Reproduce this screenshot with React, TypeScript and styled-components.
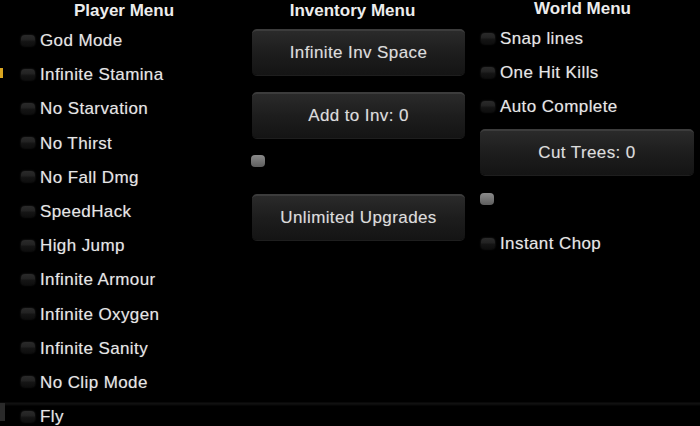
import React from "react";
import styled, { createGlobalStyle } from "styled-components";

const GlobalStyle = createGlobalStyle`
  html, body {
    margin: 0;
    padding: 0;
    background: #000;
  }
  body {
    font-family: "Liberation Sans", Arial, sans-serif;
  }
`;

const Screen = styled.div`
  position: relative;
  width: 700px;
  height: 426px;
  overflow: hidden;
  background:
    linear-gradient(
      to bottom,
      transparent 402px,
      #121212 403px,
      #0a0a0a 405px,
      transparent 406px
    ),
    #000;
  display: grid;
  grid-template-columns: 220px 225px 223px;
  column-gap: 6px;
  padding-left: 14px;
  box-sizing: border-box;
  align-items: start;
`;

const Column = styled.div<{ $top?: number }>`
  display: flex;
  flex-direction: column;
  margin-top: ${(p) => p.$top ?? 0}px;
`;

const Title = styled.div`
  height: 22px;
  line-height: 22px;
  text-align: center;
  font-size: 17px;
  font-weight: 700;
  color: #ececec;
  margin-bottom: 2px;
`;

const ToggleRow = styled.div<{ $indent?: number }>`
  height: 34.2px;
  display: flex;
  align-items: center;
  gap: 5px;
  padding-left: ${(p) => p.$indent ?? 7}px;
`;

const Box = styled.span`
  width: 14px;
  height: 11px;
  margin-top: -2px;
  border-radius: 4px;
  flex: none;
  background: linear-gradient(to bottom, #2a2a2a 0%, #232323 40%, #141414 60%, #0e0e0e 100%);
  box-shadow: 0 0 2px #2c2c2c;
`;

const Label = styled.span`
  font-size: 17px;
  letter-spacing: 0.4px;
  color: #e6e6e6;
  text-shadow: 0 0 1px rgba(255, 255, 255, 0.35);
  white-space: nowrap;
`;

const Stack = styled.div`
  display: flex;
  flex-direction: column;
  gap: 17px;
  margin-top: 5px;
`;

const Button = styled.div<{ $indent?: number; $top?: number }>`
  height: 46px;
  margin-left: ${(p) => p.$indent ?? 12}px;
  margin-top: ${(p) => p.$top ?? 0}px;
  border-radius: 5px;
  box-sizing: border-box;
  border-top: 2px solid #3c3c3c;
  background: linear-gradient(to bottom, #2a2a2a 0%, #1d1d1d 50%, #141414 100%);
  box-shadow: 0 1px 0 #1e1e1e;
  display: flex;
  align-items: center;
  justify-content: center;
  font-size: 17px;
  letter-spacing: 0.4px;
  color: #dcdcdc;
  text-shadow: 0 0 1px rgba(255, 255, 255, 0.3);
`;

const SliderRow = styled.div<{ $indent?: number; $h: number; $top?: number }>`
  height: ${(p) => p.$h}px;
  margin-top: ${(p) => p.$top ?? 0}px;
  padding-left: ${(p) => p.$indent ?? 11}px;
`;

const Thumb = styled.span`
  display: block;
  width: 14px;
  height: 12px;
  border-radius: 4px;
  background: linear-gradient(to bottom, #8a8a8a, #5e5e5e);
`;

const EdgeMark = styled.span<{ $y: number; $h: number; $w: number; $c: string }>`
  position: absolute;
  left: 0;
  top: ${(p) => p.$y}px;
  width: ${(p) => p.$w}px;
  height: ${(p) => p.$h}px;
  background: ${(p) => p.$c};
`;

const player = [
  "God Mode",
  "Infinite Stamina",
  "No Starvation",
  "No Thirst",
  "No Fall Dmg",
  "SpeedHack",
  "High Jump",
  "Infinite Armour",
  "Infinite Oxygen",
  "Infinite Sanity",
  "No Clip Mode",
  "Fly",
];

const world = ["Snap lines", "One Hit Kills", "Auto Complete"];

const Toggle = ({ label, indent }: { label: string; indent?: number }) => (
  <ToggleRow $indent={indent}>
    <Box />
    <Label>{label}</Label>
  </ToggleRow>
);

export default function App() {
  return (
    <>
      <GlobalStyle />
      <Screen>
        <EdgeMark $y={68} $h={10} $w={3} $c="#d9a520" />
        <EdgeMark $y={403} $h={18} $w={5} $c="#2a2a2a" />

        <Column>
          <Title>Player Menu</Title>
          {player.map((p) => (
            <Toggle key={p} label={p} />
          ))}
        </Column>

        <Column>
          <Title>Inventory Menu</Title>
          <Stack>
            <Button>Infinite Inv Space</Button>
            <Button>Add to Inv: 0</Button>
            <SliderRow $h={22}>
              <Thumb />
            </SliderRow>
            <Button>Unlimited Upgrades</Button>
          </Stack>
        </Column>

        <Column $top={-2}>
          <Title>World Menu</Title>
          {world.map((w) => (
            <Toggle key={w} label={w} indent={10} />
          ))}
          <Button $indent={9} $top={4.5}>
            Cut Trees: 0
          </Button>
          <SliderRow $indent={9} $h={34} $top={18}>
            <Thumb />
          </SliderRow>
          <Toggle label="Instant Chop" indent={10} />
        </Column>
      </Screen>
    </>
  );
}
